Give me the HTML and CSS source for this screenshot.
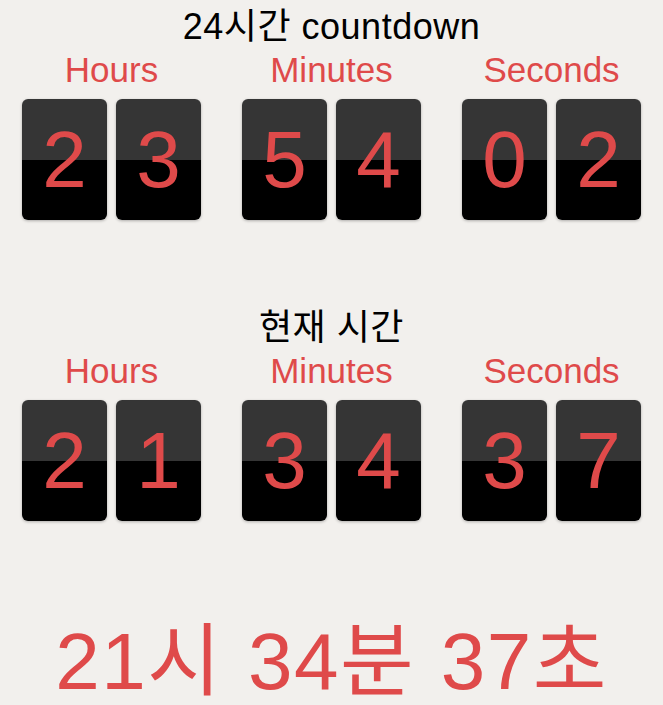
FILE: index.html
```html
<!DOCTYPE html>
<html lang="ko">
<head>
<meta charset="utf-8">
<title>24시간 countdown</title>
<link rel="stylesheet" href="styles.css">
</head>
<body>
  <section class="clock clock-countdown">
    <h1 class="clock-title">24시간 countdown</h1>
    <div class="clock-groups">
      <div class="group">
        <div class="group-label">Hours</div>
        <div class="cards"><div class="card">2</div><div class="card">3</div></div>
      </div>
      <div class="group">
        <div class="group-label">Minutes</div>
        <div class="cards"><div class="card">5</div><div class="card">4</div></div>
      </div>
      <div class="group">
        <div class="group-label">Seconds</div>
        <div class="cards"><div class="card">0</div><div class="card">2</div></div>
      </div>
    </div>
  </section>

  <section class="clock clock-now">
    <h1 class="clock-title">현재 시간</h1>
    <div class="clock-groups">
      <div class="group">
        <div class="group-label">Hours</div>
        <div class="cards"><div class="card">2</div><div class="card">1</div></div>
      </div>
      <div class="group">
        <div class="group-label">Minutes</div>
        <div class="cards"><div class="card">3</div><div class="card">4</div></div>
      </div>
      <div class="group">
        <div class="group-label">Seconds</div>
        <div class="cards"><div class="card">3</div><div class="card">7</div></div>
      </div>
    </div>
  </section>

  <div class="now-text">21시 34분 37초</div>
</body>
</html>
```

FILE: styles.css
```css
html, body {
  margin: 0;
  padding: 0;
}

body {
  background: #f2f0ed;
  font-family: "Liberation Sans", Arial, "Noto Sans CJK KR", sans-serif;
  padding-top: 7px;
  color: #000;
}

.clock {
  display: flex;
  flex-direction: column;
  align-items: center;
}

.clock-countdown {
  margin-bottom: 88px;
}

.clock-title {
  margin: 0;
  font-size: 36px;
  font-weight: normal;
  line-height: 40px;
  height: 40px;
  text-align: center;
  letter-spacing: 0.5px;
}

.clock-groups {
  display: flex;
  gap: 41px;
  margin-top: 3px;
}

.group {
  display: flex;
  flex-direction: column;
  align-items: center;
}

.group-label {
  font-size: 35px;
  line-height: 40px;
  height: 40px;
  color: #df4a4a;
  margin-bottom: 9px;
}

.cards {
  display: flex;
  gap: 9px;
}

.card {
  width: 85px;
  height: 121px;
  border-radius: 6px;
  background: linear-gradient(to bottom, #353535 0, #353535 50%, #000 50%, #000 100%);
  box-shadow: 0 1px 3px rgba(0, 0, 0, 0.28);
  color: #df4a4a;
  font-size: 80px;
  line-height: 121px;
  text-align: center;
}

.now-text {
  margin-top: 95px;
  font-size: 80px;
  line-height: 92px;
  color: #df4a4a;
  text-align: center;
  letter-spacing: 1.5px;
  word-spacing: 2px;
}
```
